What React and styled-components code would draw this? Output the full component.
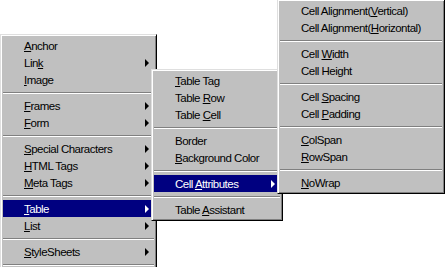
import styled, { createGlobalStyle } from 'styled-components';

const GlobalStyle = createGlobalStyle`
  html, body {
    margin: 0;
    padding: 0;
    background: #ffffff;
    overflow: hidden;
  }
  body {
    width: 445px;
    height: 267px;
  }
`;

// item label: [before, hotkey, after]
const mainMenu = [
  { label: ['', 'A', 'nchor'] },
  { label: ['Lin', 'k', ''], sub: true },
  { label: ['', 'I', 'mage'] },
  'sep',
  { label: ['', 'F', 'rames'], sub: true },
  { label: ['', 'F', 'orm'], sub: true },
  'sep',
  { label: ['', 'S', 'pecial Characters'], sub: true },
  { label: ['', 'H', 'TML Tags'], sub: true },
  { label: ['', 'M', 'eta Tags'], sub: true },
  'sep',
  { label: ['', 'T', 'able'], sub: true, active: true },
  { label: ['', 'L', 'ist'], sub: true },
  'sep',
  { label: ['', 'S', 'tyleSheets'], sub: true },
  'sep',
];

const tableMenu = [
  { label: ['', 'T', 'able Tag'] },
  { label: ['Table ', 'R', 'ow'] },
  { label: ['Table ', 'C', 'ell'] },
  'sep',
  { label: ['Border', '', ''] },
  { label: ['', 'B', 'ackground Color'] },
  'sep',
  { label: ['Cell ', 'A', 'ttributes'], sub: true, active: true },
  'sep',
  { label: ['Table ', 'A', 'ssistant'] },
];

const cellMenu = [
  { label: ['Cell Alignment(', 'V', 'ertical)'] },
  { label: ['Cell Alignment(', 'H', 'orizontal)'] },
  'sep',
  { label: ['Cell ', 'W', 'idth'] },
  { label: ['Cell Height', '', ''] },
  'sep',
  { label: ['Cell ', 'S', 'pacing'] },
  { label: ['Cell ', 'P', 'adding'] },
  'sep',
  { label: ['', 'C', 'olSpan'] },
  { label: ['', 'R', 'owSpan'] },
  'sep',
  { label: ['', 'N', 'oWrap'] },
];

const Screen = styled.div`
  position: relative;
  width: 445px;
  height: 267px;
  overflow: hidden;
  font-family: 'Liberation Sans', Arial, sans-serif;
  font-size: 11.5px;
  letter-spacing: -0.5px;
  color: #000000;
`;

const Menu = styled.ul`
  position: absolute;
  left: ${p => p.$x}px;
  top: ${p => p.$y}px;
  width: ${p => p.$w}px;
  z-index: ${p => p.$z};
  box-sizing: border-box;
  margin: 0;
  padding: 2px;
  list-style: none;
  background: #c0c0c0;
  border: 1px solid;
  border-color: #dfdfdf #000000 #000000 #dfdfdf;
  box-shadow: inset 1px 1px #ffffff, inset -1px -1px #808080;
`;

const Item = styled.li`
  display: flex;
  align-items: center;
  justify-content: space-between;
  height: 17px;
  padding: 0 5px 0 21px;
  white-space: nowrap;
  background: ${p => (p.$active ? '#000080' : 'transparent')};
  color: ${p => (p.$active ? '#ffffff' : '#000000')};

  u {
    text-decoration-thickness: 1px;
    text-underline-offset: 1px;
  }
`;

const Arrow = styled.span`
  width: 0;
  height: 0;
  border-top: 4px solid transparent;
  border-bottom: 4px solid transparent;
  border-left: 4px solid ${p => (p.$active ? '#ffffff' : '#000000')};
`;

const Separator = styled.li`
  height: 9px;
  display: flex;
  align-items: center;

  &::before {
    content: '';
    flex: 1;
    height: 0;
    border-top: 1px solid #808080;
    border-bottom: 1px solid #ffffff;
  }
`;

const PopupMenu = ({ items, x, y, w, z }) => (
  <Menu $x={x} $y={y} $w={w} $z={z}>
    {items.map((item, i) => {
      if (item === 'sep') return <Separator key={i} />;
      const [before, key, after] = item.label;
      return (
        <Item key={i} $active={item.active}>
          <span>
            {before}
            {key && <u>{key}</u>}
            {after}
          </span>
          {item.sub && <Arrow $active={item.active} />}
        </Item>
      );
    })}
  </Menu>
);

const App = () => {
  return (
    <Screen>
      <GlobalStyle />
      <PopupMenu items={mainMenu} x={0} y={34} w={157} z={1} />
      <PopupMenu items={tableMenu} x={151} y={69} w={132} z={2} />
      <PopupMenu items={cellMenu} x={277} y={-1} w={168} z={3} />
    </Screen>
  );
};

export default App;
